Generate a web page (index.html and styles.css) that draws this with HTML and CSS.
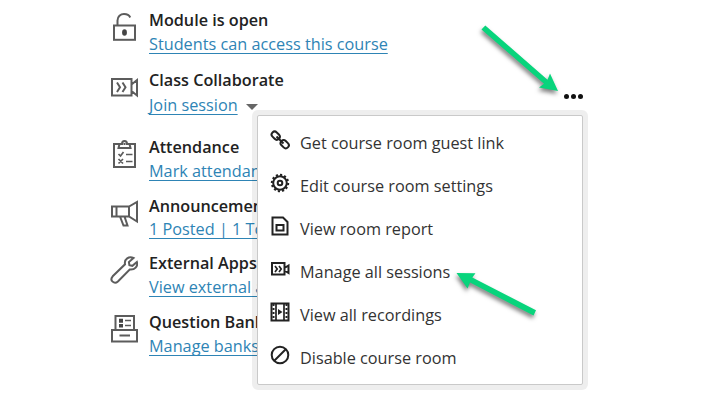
FILE: index.html
```html
<!DOCTYPE html>
<html lang="en">

<head>
    <meta charset="UTF-8">
    <meta name="viewport" content="width=device-width, initial-scale=1.0">
    <title>Course details</title>
    <link rel="stylesheet" href="styles.css">
</head>

<body>
    <main class="details">
        <section class="row">
            <svg class="icon icon-lock" viewBox="0 0 28 30">
                <rect x="4" y="13.500" width="21" height="14.300"/>
                <path d="M7.500 13V8.500C7.500 4.500 10.500 2 14 2c3 0 5.300 1.300 6.200 3.500"/>
                <ellipse class="solid" cx="14.500" cy="20.500" rx="2.400" ry="3.200"/>
            </svg>
            <div class="text">
                <h2>Module is open</h2>
                <a href="#">Students can access this course</a>
            </div>
        </section>
        <section class="row row-collab">
            <svg class="icon icon-camera" viewBox="0 0 28 30">
                <path d="M2 7h19.500v16.500H2zM21.500 12.500l5.500-4.500v15.500l-5.500-4.500M7 10.500l3 4.700-3 4.800M12.500 10.500l3 4.700-3 4.800"/>
            </svg>
            <div class="text">
                <h2>Class Collaborate</h2>
                <a href="#">Join session</a><span class="caret"></span>
            </div>
            <button class="more" aria-label="More options"><i></i><i></i><i></i></button>
        </section>
        <section class="row row-attendance">
            <svg class="icon icon-clipboard" viewBox="0 0 28 30">
                <path d="M9 5H4v23h21V5h-5"/>
                <path d="M9.500 5h2.500c0-4 5-4 5 0h2.500l1 4h-12zM14.500 4v2"/>
                <path class="thin" d="M8.500 15l2 2 3-4M16 15.500h6.500M8.500 20l4.500 4.500M13 20l-4.500 4.500M16 22.500h6.500"/>
            </svg>
            <div class="text">
                <h2>Attendance</h2>
                <a href="#">Mark attendance</a>
            </div>
        </section>
        <section class="row row-announce">
            <svg class="icon icon-megaphone" viewBox="0 0 28 30">
                <path d="M2 7.500h17l8-4.500v19.500l-8-5H2zM6.500 7.500v10M19 7.500v10M10 17.500l3.500 9h4L14.500 17.500"/>
            </svg>
            <div class="text">
                <h2>Announcements</h2>
                <a href="#">1 Posted | 1 Total</a>
            </div>
        </section>
        <section class="row row-apps">
            <svg class="icon icon-wrench" viewBox="0 0 28 30">
                <path d="M23.500 3c-4.500-2-9.500 1-8.500 6.300L2.700 21.300c-3.500 4 1.500 8.500 5.200 5.200l11.800-12c5 .7 8.500-3.200 7.200-7.500l-4.500 3.800-3-.7-.5-3z"/>
            </svg>
            <div class="text">
                <h2>External Apps</h2>
                <a href="#">View external apps</a>
            </div>
        </section>
        <section class="row row-bank">
            <svg class="icon icon-bank" viewBox="0 0 28 30">
                <path d="M2 16h25v11.500H2zM5.500 16V2h18.500v14M9.500 21.500h10.500"/>
                <path class="thin" d="M15 6.500h6M15 11.500h6"/>
                <path class="solid" d="M9 4.700h4v4H9zM9 10h4v3.500H9z"/>
            </svg>
            <div class="text">
                <h2>Question Banks</h2>
                <a href="#">Manage banks</a>
            </div>
        </section>
    </main>

    <ul class="menu">
        <li>
            <svg viewBox="0 0 20 20">
                <rect x="1.200" y="2.600" width="9" height="6" rx="3" transform="rotate(45 5.700 5.600)"/>
                <rect x="10.200" y="11.200" width="9" height="6" rx="3" transform="rotate(45 14.700 14.200)"/>
                <path d="M6.500 6.500l7 7"/>
            </svg>
            Get course room guest link
        </li>
        <li>
            <svg viewBox="0 0 20 20">
                <circle cx="10" cy="10" r="6.800"/>
                <circle class="teeth" cx="10" cy="10" r="8.200" pathLength="96"/>
                <circle cx="10" cy="10" r="2.300"/>
            </svg>
            Edit course room settings
        </li>
        <li>
            <svg viewBox="0 0 20 20">
                <path d="M2.500 1.500h10.500L17.500 6v12.500h-15zM6.500 9h7v5.500h-7z"/>
            </svg>
            View room report
        </li>
        <li>
            <svg viewBox="0 0 20 20">
                <path d="M2 4h12.500v11.500H2zM14.500 9l4-2.500v7.500l-4-2.500"/>
                <path class="thin" d="M5 7l2.200 3L5 13M9 7l2.200 3L9 13"/>
            </svg>
            Manage all sessions
        </li>
        <li>
            <svg viewBox="0 0 20 20">
                <path d="M1.500 1.500h17v17h-17z"/>
                <path class="thin" d="M6 1v18M14 1v18"/>
                <path class="holes" d="M3.500 2v16M16.500 2v16"/>
                <path class="solid" d="M8 7l4.500 3L8 13z"/>
            </svg>
            View all recordings
        </li>
        <li>
            <svg viewBox="0 0 20 20">
                <circle cx="10" cy="10" r="8.300"/>
                <path d="M16 4L4 16"/>
            </svg>
            Disable course room
        </li>
    </ul>

    <svg class="arrows" viewBox="0 0 711 400">
        <path d="M485.300 25.500L547.500 79.800 550 73.500 558 91 539 87.500 544 83.800 481.500 29.500z"/>
        <path d="M456.500 273L475.500 273.200 472.300 277.600 536 310.300 533.500 315.500 470 282.500 467.500 288.500z"/>
    </svg>
</body>

</html>
```

FILE: styles.css
```css
* {
    box-sizing: border-box;
    margin: 0;
    padding: 0;
}

body {
    width: 711px;
    height: 400px;
    overflow: hidden;
    position: relative;
    background: #fff;
    color: #222;
    font-family: "Open Sans", "Noto Sans", sans-serif;
    font-size: 16.25px;
    line-height: 24px;
}

.details {
    padding: 8px 0 0 110px;
}

.row {
    display: flex;
    gap: 11px;
    height: 60px;
}

.row-collab {
    height: 67px;
}

.row-announce {
    height: 56px;
}

.row-apps {
    height: 59px;
}

.text {
    width: 404px;
    white-space: nowrap;
}

h2 {
    font-size: 16.2px;
    font-weight: 600;
    line-height: 24px;
}

.row-collab h2 {
    line-height: 25px;
}

.row-announce h2 {
    line-height: 23px;
}

.row-announce a {
    display: block;
    line-height: 22px;
}

a {
    color: #2e84b5;
    text-decoration: underline;
    text-decoration-thickness: 1px;
    text-underline-offset: 3px;
    text-decoration-skip-ink: none;
}

.caret {
    display: inline-block;
    margin-left: 8px;
    border: 6px solid transparent;
    border-top-color: #666;
    border-bottom: 0;
    vertical-align: 1px;
}

svg {
    fill: none;
    stroke: #222;
    stroke-width: 2;
}

.icon {
    width: 28px;
    height: 30px;
    margin-top: 4px;
    flex: none;
    stroke: #5c5c5c;
}

svg .thin {
    stroke-width: 1.7;
}

svg .solid {
    fill: #444;
    stroke: none;
}

.more {
    display: flex;
    gap: 2px;
    height: 5px;
    margin-top: 26px;
    border: 0;
    background: none;
}

.more i {
    width: 5px;
    height: 5px;
    border-radius: 50%;
    background: #111;
}

.menu {
    position: absolute;
    left: 257px;
    top: 115px;
    width: 326px;
    height: 270px;
    padding: 5px 0 0 12px;
    border: 1px solid #c9c9c9;
    border-radius: 2px;
    background: #fff;
    box-shadow: 0 0 0 5px rgba(0, 0, 0, 0.065);
    list-style: none;
    color: #333;
}

.menu li {
    display: flex;
    align-items: center;
    gap: 10px;
    height: 43px;
}

.menu svg {
    width: 20px;
    height: 20px;
    margin-top: -6px;
}

.menu .teeth {
    stroke-width: 2;
    stroke-dasharray: 4 4;
}

.menu .holes {
    stroke-dasharray: 2 2;
}

.menu .solid {
    fill: #222;
}

.arrows {
    position: absolute;
    left: 0;
    top: 0;
    width: 711px;
    height: 400px;
    pointer-events: none;
    fill: #08d47c;
    stroke: none;
    filter: drop-shadow(-1px 3px 2px rgba(0, 0, 0, 0.5));
}
```
